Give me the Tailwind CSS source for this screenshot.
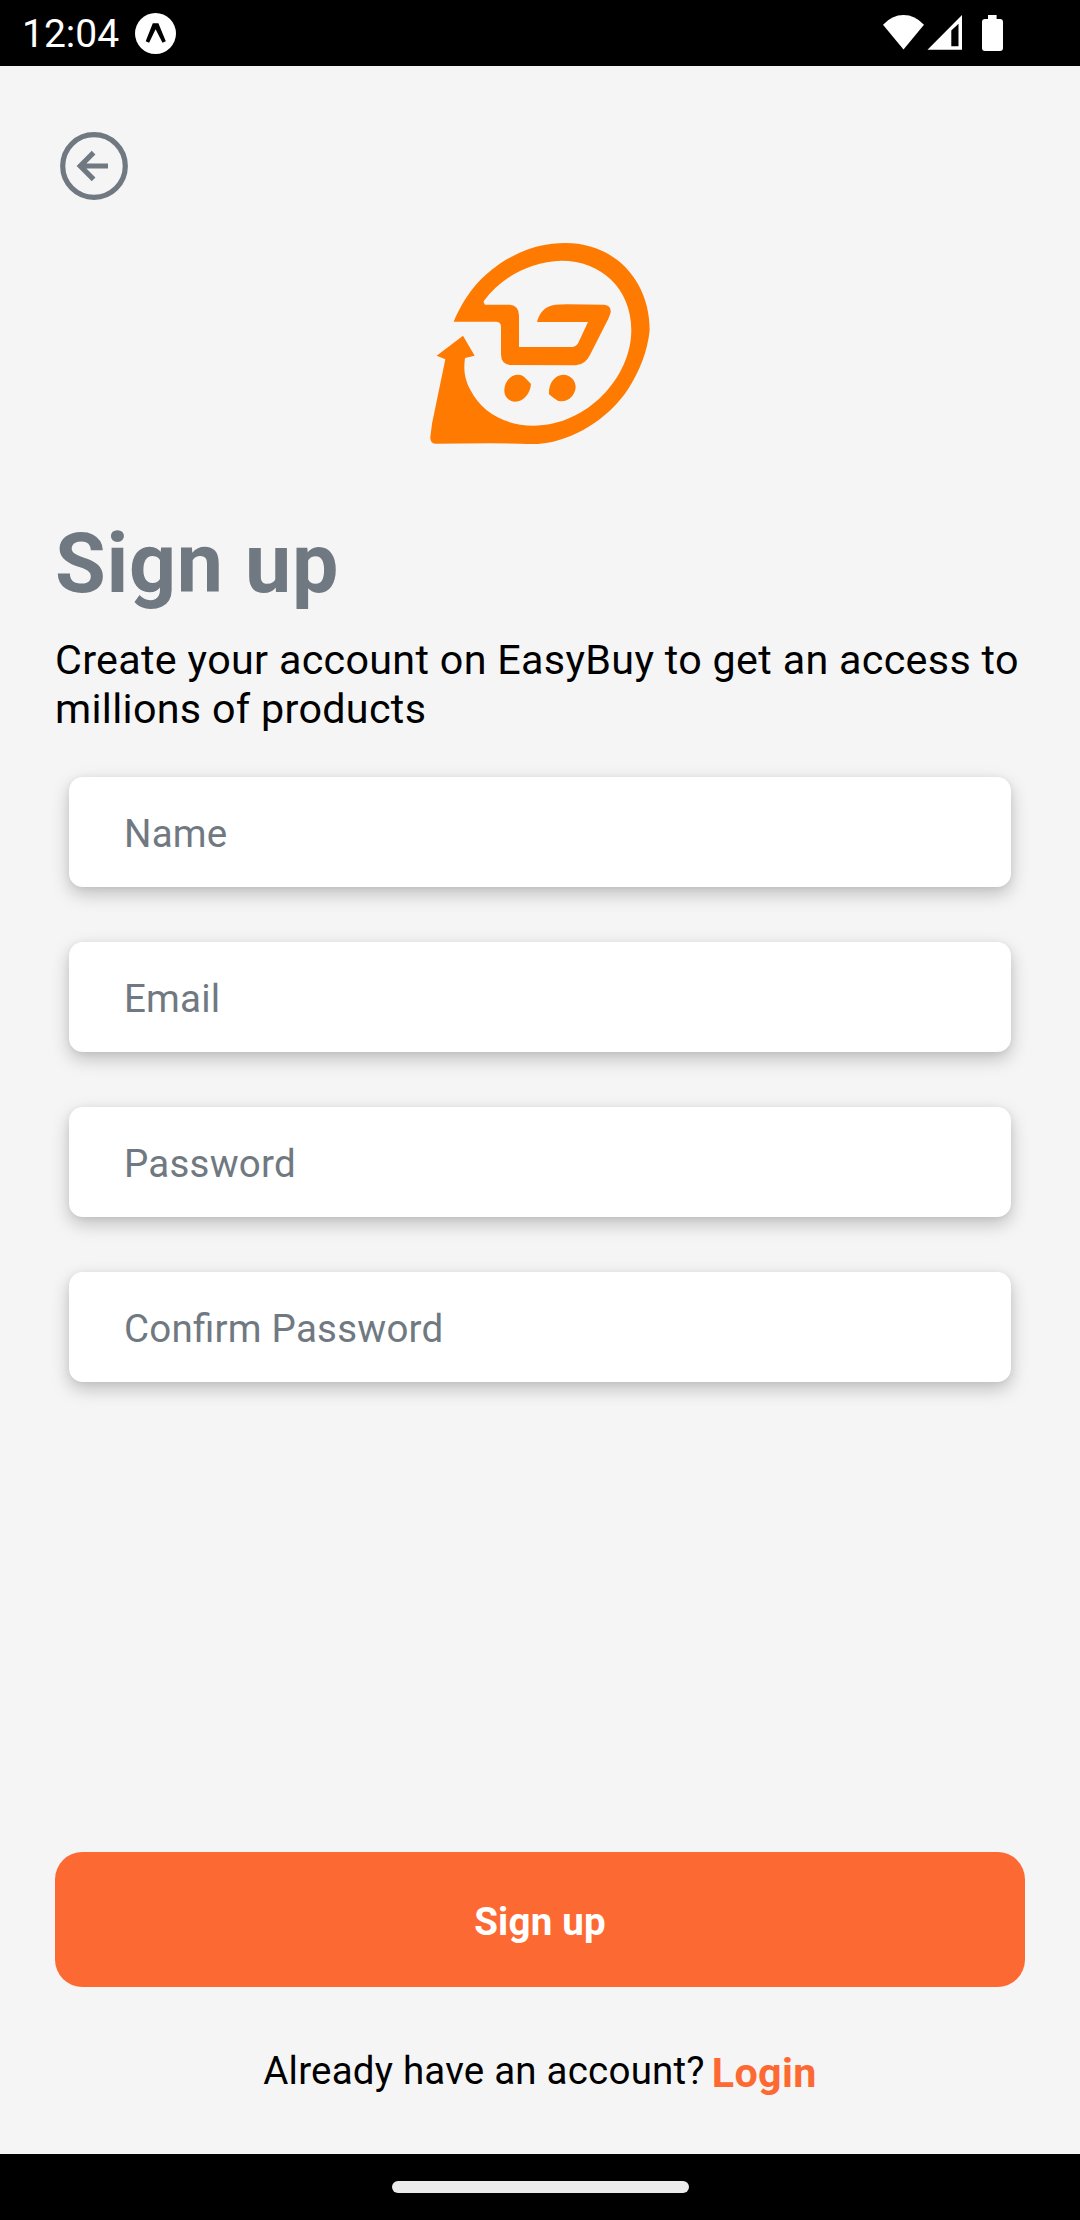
<!DOCTYPE html>
<html lang="en">
<head>
<meta charset="utf-8">
<title>EasyBuy - Sign up</title>
<script src="https://cdn.jsdelivr.net/npm/@tailwindcss/browser@4"></script>
</head>
<body class="flex h-[2220px] w-[1080px] flex-col overflow-hidden bg-[#f5f5f5] font-['Roboto',sans-serif] text-black">
  <header class="flex h-[66px] shrink-0 items-center bg-black pl-[22px] pr-[76px] text-white">
    <span class="w-[113px] whitespace-nowrap pt-[2px] text-[39px] leading-[66px]">12:04</span>
    <svg class="h-[41px] w-[41px]" viewBox="0 0 41 41"><circle cx="20.5" cy="20.5" r="20.5" fill="#fff"/><path d="M17.800 10.300h5.600l7.400 17.900-3.300 1.600-6.900-13.600-6.500 13.600-3.400-1.600z" fill="#000"/></svg>
    <svg class="ml-auto h-[36px] w-[121px]" viewBox="0 0 121 36" fill="#fff">
      <path d="M0 9.700Q9 0 20.500 0T41 9.700L20.500 34.500z"/>
      <path fill-rule="evenodd" d="M44.500 34.800 79 0v34.800zM68.300 15.500v15.700h7.200V8.700z"/>
      <path d="M105 0h8.600v4h3.400q3 0 3 3v26q0 3-3 3h-15q-3 0-3-3V7q0-3 3-3h3z"/>
    </svg>
  </header>

  <main class="flex grow flex-col px-[55px] pt-[61px]">
    <a href="#" class="block h-[78px] w-[78px]" aria-label="Back">
      <svg class="h-[78px] w-[78px]" viewBox="0 0 78 78" fill="none" stroke="#707981" stroke-width="5.2"><circle cx="39" cy="39" r="31.3"/><path d="M53 39H25M38.600 25.700 25.300 39l13.300 13.300"/></svg>
    </a>

    <svg class="mt-[20px] h-[235px] w-[260px] self-center" viewBox="0 0 780 705" fill="#ff7a00">
      <path d="M131 290C165 211 204 163 268 117C337 72 400 54 466 54C615 54 719 167 719 315C713 380 687 441 655 491C595 583 486 648 390 656C375 658 350 657 330 656L240 655L76 656Q60 655 61 636L66 596L106 403L80 392L159 332L194 392L165 399C159 440 167 467 180 493C216 565 289 602 370 602C531 602 664 457 664 315C664 190 572 107 455 107C358 111 276 155 221 229Q221 237 225 239H300Q327 242 327 272V366H480C492 366 500 363 505 353L534 291H381C388 263 405 243 436 239L470 238L583 239Q604 242 602 262Q600 271 595 281L541 388Q526 420 497 421L300 420Q273 417 273 388V306Q273 290 257 290Z"/>
      <path d="M325 449Q338 449 348 461L363 477C361 505 341 530 316 530C296 530 282 515 283 494C284 470 301 449 325 449ZM460 449C481 449 497 466 497 487C495 511 477 529 454 529Q442 529 432 520L417 508C415 477 433 449 460 449Z"/>
    </svg>

    <h1 class="mt-[56px] text-[82.5px] font-bold leading-[96px] tracking-[0.7px] text-[#707981]">Sign up</h1>
    <p class="mt-[24px] whitespace-nowrap text-[41.25px] leading-[49px] tracking-[0.32px]">Create your account on EasyBuy to get an access to<br>millions of products</p>

    <form class="mx-[14px] mt-[43px] flex flex-col gap-[55px]">
      <input class="h-[110px] rounded-[13.75px] bg-white px-[55px] pt-[3px] text-[38.5px] tracking-[0.23px] shadow-[0_7px_18px_rgba(0,0,0,0.22),0_1px_6px_rgba(0,0,0,0.06)] [font-feature-settings:'liga'] placeholder:text-[#707981]" type="text" placeholder="Name">
      <input class="h-[110px] rounded-[13.75px] bg-white px-[55px] pt-[3px] text-[38.5px] tracking-[0.23px] shadow-[0_7px_18px_rgba(0,0,0,0.22),0_1px_6px_rgba(0,0,0,0.06)] [font-feature-settings:'liga'] placeholder:text-[#707981]" type="email" placeholder="Email">
      <input class="h-[110px] rounded-[13.75px] bg-white px-[55px] pt-[3px] text-[38.5px] tracking-[0.23px] shadow-[0_7px_18px_rgba(0,0,0,0.22),0_1px_6px_rgba(0,0,0,0.06)] [font-feature-settings:'liga'] placeholder:text-[#707981]" type="password" placeholder="Password">
      <input class="h-[110px] rounded-[13.75px] bg-white px-[55px] pt-[3px] text-[38.5px] tracking-[0.23px] shadow-[0_7px_18px_rgba(0,0,0,0.22),0_1px_6px_rgba(0,0,0,0.06)] [font-feature-settings:'liga'] placeholder:text-[#707981]" type="password" placeholder="Confirm Password">
    </form>

    <button class="mt-auto h-[135px] shrink-0 rounded-[27.5px] bg-[#fd6932] pt-[4px] text-[38.5px] font-bold tracking-[0.2px] text-white">Sign up</button>
    <div class="mt-[61px] mb-[58px] flex h-[48px] items-start justify-center gap-[7px] whitespace-nowrap">
      <span class="text-[38.5px] leading-[46px] tracking-[0.21px]">Already have an account?</span>
      <a href="#" class="pt-[1px] text-[41.25px] font-bold leading-[48px] tracking-[0.35px] text-[#fd6932]">Login</a>
    </div>
  </main>

  <footer class="flex h-[66px] shrink-0 items-center justify-center bg-black">
    <div class="h-[12px] w-[297px] rounded-full bg-[#ebebeb]"></div>
  </footer>
</body>
</html>
